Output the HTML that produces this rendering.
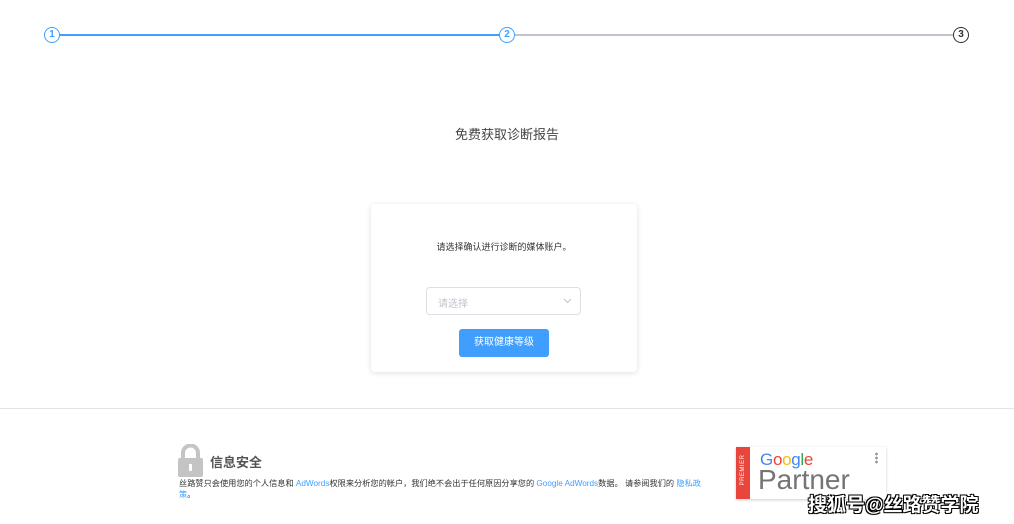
<!DOCTYPE html>
<html><head><meta charset="utf-8"><style>
*{margin:0;padding:0;box-sizing:border-box}
body{width:1014px;height:524px;background:#fff;position:relative;overflow:hidden;font-family:"Liberation Sans","Noto Sans CJK SC",sans-serif;color:#333}
.a{position:absolute}
.c{width:16px;height:16px;border-radius:50%;border:1.5px solid #409eff;background:#fff;color:#409eff;font-size:10px;font-weight:bold;text-align:center;line-height:13px}
</style></head><body>
<div class="a" style="left:52px;top:34px;width:455px;height:2px;background:#409eff"></div>
<div class="a" style="left:507px;top:34px;width:454px;height:2px;background:#c0c4cc"></div>
<div class="a c" style="left:44px;top:27px">1</div>
<div class="a c" style="left:499px;top:27px">2</div>
<div class="a c" style="left:953px;top:27px;border-color:#303133;color:#303133">3</div>
<div class="a" style="left:0;width:1014px;top:124px;text-align:center;font-size:13px;color:#444">免费获取诊断报告</div>
<div class="a" style="left:371px;top:204px;width:266px;height:168px;background:#fff;border-radius:4px;box-shadow:0 1px 6px rgba(0,0,0,.13)"></div>
<div class="a" style="left:371px;width:266px;top:240px;text-align:center;font-size:9px;color:#333">请选择确认进行诊断的媒体账户。</div>
<div class="a" style="left:426px;top:287px;width:155px;height:28px;border:1px solid #dcdfe6;border-radius:4px;font-size:10px;color:#c0c4cc;padding:7px 0 0 11px">请选择
<svg class="a" style="right:8px;top:10px" width="9" height="6" viewBox="0 0 9 6"><path d="M1 1l3.5 3.5L8 1" fill="none" stroke="#c0c4cc" stroke-width="1"/></svg></div>
<div class="a" style="left:459px;top:329px;width:90px;height:28px;background:#409eff;border-radius:3px;color:#fff;font-size:10px;text-align:center;line-height:28px">获取健康等级</div>
<div class="a" style="left:0;top:408px;width:1014px;height:1px;background:#e4e4e4"></div>
<svg class="a" style="left:178px;top:444px" width="25" height="33" viewBox="0 0 25 33"><path d="M5 14V9a7.5 7.5 0 0 1 15 0v5" fill="none" stroke="#c4c4c4" stroke-width="4"/><rect x="0" y="14" width="25" height="19" rx="2" fill="#c4c4c4"/><rect x="11" y="20" width="3" height="7" fill="#fff"/></svg>
<div class="a" style="left:210px;top:452px;font-size:13px;font-weight:bold;color:#555">信息安全</div>
<div class="a" style="left:179px;top:478px;white-space:nowrap;font-size:8.2px;line-height:11px;color:#333">丝路赞只会使用您的个人信息和 <span style="color:#409eff">AdWords</span>权限来分析您的帐户，我们绝不会出于任何原因分享您的 <span style="color:#409eff">Google AdWords</span>数据。 请参阅我们的 <span style="color:#409eff">隐私政<br>策</span>。</div>
<div class="a" style="left:736px;top:447px;width:150px;height:52px;background:#fff;box-shadow:0 1px 3px rgba(0,0,0,.2)"></div>
<div class="a" style="left:736px;top:447px;width:14px;height:52px;background:#e8453c"><div style="position:absolute;left:-12px;top:20px;width:38px;transform:rotate(-90deg);color:#fff;font-size:6px;text-align:center;letter-spacing:.5px">PREMIER</div></div>
<div class="a" style="left:760px;top:450px;font-size:17px;letter-spacing:-.3px"><span style="color:#4285f4">G</span><span style="color:#ea4335">o</span><span style="color:#fbbc05">o</span><span style="color:#4285f4">g</span><span style="color:#34a853">l</span><span style="color:#ea4335">e</span></div>
<div class="a" style="left:758px;top:464px;font-size:28px;color:#757575">Partner</div>
<div class="a" style="left:875px;top:452px;width:3px;height:12px;background:radial-gradient(circle,#999 1.3px,transparent 1.5px) 0 0/3px 4px"></div>
<div class="a" style="left:808px;top:490px;font-size:19px;font-weight:bold;color:#fff;text-shadow:-1px -1px 0 #000,1px -1px 0 #000,-1px 1px 0 #000,1px 1px 0 #000">搜狐号@丝路赞学院</div>
</body></html>
